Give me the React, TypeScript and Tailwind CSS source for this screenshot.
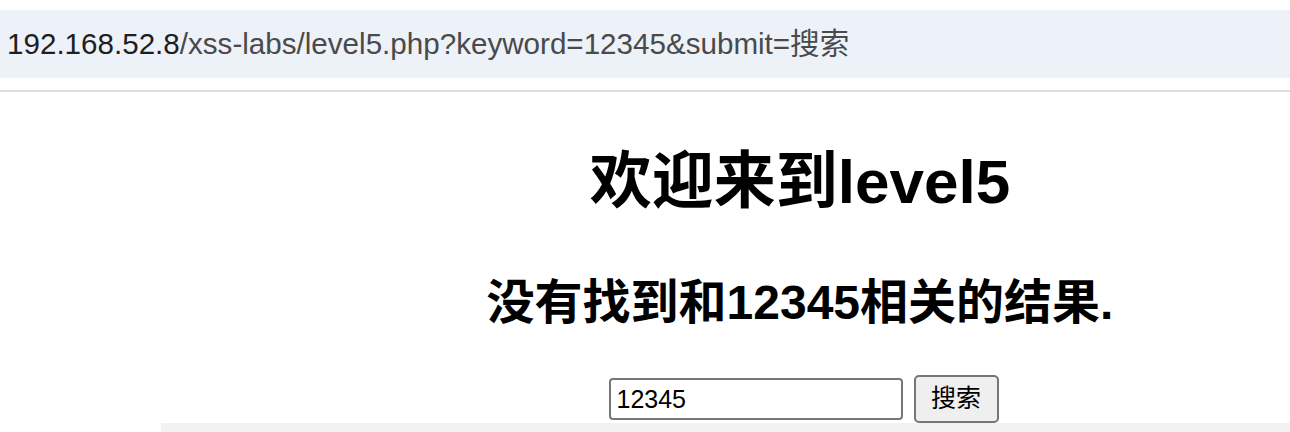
import React from 'react';

const sans = "font-['Liberation_Sans','Noto_Sans_CJK_SC',sans-serif]";

const App: React.FC = () => {
  return (
    <div className={`w-[1290px] h-[432px] overflow-hidden bg-white ${sans}`}>
      {/* address bar */}
      <div className="pt-[10px]">
        <div className="flex h-[68px] items-center bg-[#edf1f8] pl-[7px] text-[29.6px]">
          <span className="text-[#1f1f1f]">192.168.52.8</span>
          <span className="text-[#4a4a4a]">/xss-labs/level5.php?keyword=12345&amp;submit=搜索</span>
        </div>
      </div>
      <div className="mt-[12px] h-[2px] bg-[#dedede]" />

      {/* page */}
      <div className="ml-[161px] flex w-[1278px] flex-col items-center">
        <h1 className="mt-[54px] text-[62px] font-bold leading-[72px] text-black">欢迎来到level5</h1>
        <h2 className="mt-[57px] text-[48px] font-bold leading-[56px] text-black">没有找到和12345相关的结果.</h2>
        <div className="mt-[44px] flex items-center gap-[11px] pl-[7px]">
          <input
            readOnly
            value="12345"
            className="h-[42px] w-[294px] rounded-[4px] border-2 border-[#767676] bg-white px-[6px] text-[25px] text-black outline-none"
          />
          <button className="h-[48px] w-[85px] rounded-[5px] border-2 border-[#767676] bg-[#efefef] text-[25px] text-black">
            搜索
          </button>
        </div>
        <div className="h-[20px] w-full bg-[#f2f2f2]" />
      </div>
    </div>
  );
};

export default App;
